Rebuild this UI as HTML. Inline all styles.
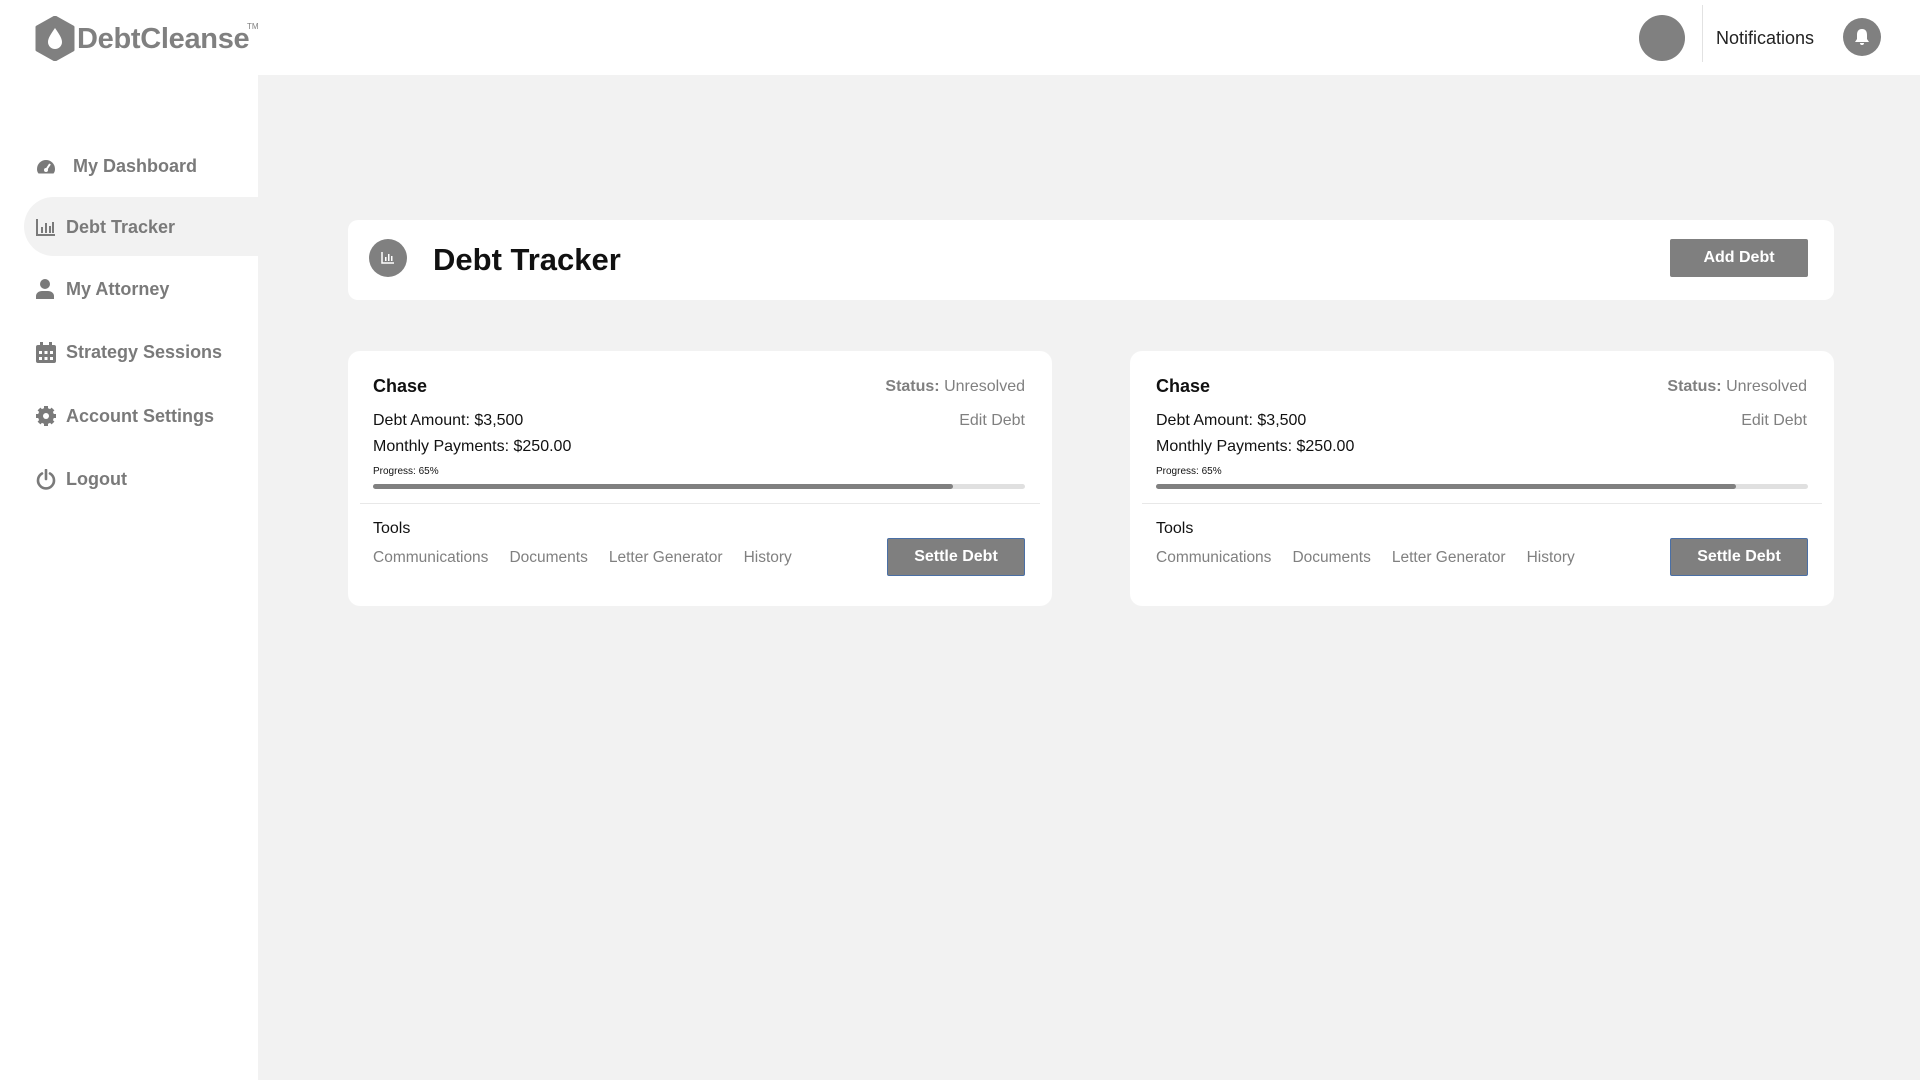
<!DOCTYPE html>
<html><head><meta charset="utf-8"><style>
*{box-sizing:border-box;margin:0;padding:0}
body{width:1920px;height:1080px;background:#f2f2f2;font-family:"Liberation Sans",sans-serif;position:relative;overflow:hidden;color:#111}
.abs{position:absolute}
#hdr{left:0;top:0;width:1920px;height:75px;background:#fff}
#side{left:0;top:75px;width:258px;height:1005px;background:#fff}
.nav{position:absolute;left:0;width:258px;font-size:18px;color:#7a7a7a;font-weight:bold;display:flex;align-items:center}
.nav svg{position:absolute;left:36px}
.card{background:#fff;border-radius:12px;position:absolute}
.gray{color:#808080}
.btn{position:absolute;background:#7f7f7f;color:#fff;font-weight:bold;font-size:16px;display:flex;align-items:center;justify-content:center;border-radius:2px}
</style></head><body>
<div id="hdr" class="abs">
<svg class="abs" style="left:34px;top:16px" width="42" height="45" viewBox="0 0 42 45"><path d="M21 1 L39 11 L39 34 L21 44 L3 34 L3 11 Z" fill="#808080" stroke="#808080" stroke-width="3" stroke-linejoin="round"/><path d="M21 12 C17 18 14 22 14 26 a7 7 0 0 0 14 0 C28 22 25 18 21 12Z" fill="#fff"/></svg>
<div class="abs" style="left:77px;top:23px;font-size:29px;font-weight:bold;color:#808080;letter-spacing:-0.3px">DebtCleanse</div>
<div class="abs" style="left:247px;top:22px;font-size:8px;color:#808080">TM</div>
<div class="abs" style="left:1639px;top:15px;width:46px;height:46px;border-radius:50%;background:#808080"></div>
<div class="abs" style="left:1702px;top:5px;width:1px;height:57px;background:#e2e2e2"></div>
<div class="abs" style="left:1716px;top:28px;font-size:18px;color:#222">Notifications</div>
<div class="abs" style="left:1843px;top:18px;width:38px;height:38px;border-radius:50%;background:#808080"></div>
<svg class="abs" style="left:1852px;top:27px" width="20" height="20" viewBox="0 0 20 20"><path d="M10 2 C6 2 5 5 5 8 L5 12 L3 15 L17 15 L15 12 L15 8 C15 5 14 2 10 2Z M8 16 a2 2 0 0 0 4 0Z" fill="#fff"/></svg>
</div>
<div id="side" class="abs"></div>
<div class="abs" style="left:24px;top:197px;width:234px;height:59px;background:#f2f2f2;border-radius:30px 0 0 30px"></div>
<div class="abs" style="left:238px;top:176px;width:20px;height:21px;background:#fff;border-bottom-right-radius:20px"></div>
<div class="abs" style="left:238px;top:256px;width:20px;height:21px;background:#fff;border-top-right-radius:20px"></div>
<div class="nav" style="top:153px;height:26px"><svg width="20" height="18" viewBox="0 0 20 18"><path d="M10 3a9 9 0 0 0-9 9c0 2 .6 3.5 1.5 4.5h15c.9-1 1.5-2.5 1.5-4.5a9 9 0 0 0-9-9z" fill="#7a7a7a"/><circle cx="10" cy="13" r="2" fill="#fff"/><path d="M10 13 L14 7" stroke="#fff" stroke-width="2"/></svg><span style="margin-left:73px">My Dashboard</span></div>
<div class="nav" style="top:214px;height:26px"><svg width="20" height="18" viewBox="0 0 20 18"><path d="M1 1v16h18" stroke="#7a7a7a" stroke-width="2" fill="none"/><rect x="5" y="9" width="2" height="6" fill="#7a7a7a"/><rect x="9" y="5" width="2" height="10" fill="#7a7a7a"/><rect x="13" y="8" width="2" height="7" fill="#7a7a7a"/><rect x="16" y="4" width="2" height="11" fill="#7a7a7a"/></svg><span style="margin-left:66px">Debt Tracker</span></div>
<div class="nav" style="top:276px;height:26px"><svg width="18" height="20" viewBox="0 0 18 20"><circle cx="9" cy="5" r="5" fill="#7a7a7a"/><path d="M0 20v-3c0-3 3-5 6-5h6c3 0 6 2 6 5v3z" fill="#7a7a7a"/></svg><span style="margin-left:66px">My Attorney</span></div>
<div class="nav" style="top:339px;height:26px"><svg width="20" height="21" viewBox="0 0 20 21"><rect x="0" y="3" width="20" height="18" rx="2" fill="#7a7a7a"/><rect x="4" y="0" width="3" height="5" fill="#7a7a7a"/><rect x="13" y="0" width="3" height="5" fill="#7a7a7a"/><g fill="#fff"><rect x="3" y="9" width="3" height="3"/><rect x="8.5" y="9" width="3" height="3"/><rect x="14" y="9" width="3" height="3"/><rect x="3" y="15" width="3" height="3"/><rect x="8.5" y="15" width="3" height="3"/><rect x="14" y="15" width="3" height="3"/></g></svg><span style="margin-left:66px">Strategy Sessions</span></div>
<div class="nav" style="top:403px;height:26px"><svg width="20" height="20" viewBox="0 0 20 20"><circle cx="10" cy="10" r="8" fill="#7a7a7a"/><g stroke="#7a7a7a" stroke-width="4"><path d="M10 0v20M0 10h20M3 3l14 14M17 3L3 17"/></g><circle cx="10" cy="10" r="3" fill="#fff"/></svg><span style="margin-left:66px">Account Settings</span></div>
<div class="nav" style="top:466px;height:26px"><svg width="20" height="21" viewBox="0 0 20 21"><path d="M6 4.5a8 8 0 1 0 8 0" stroke="#7a7a7a" stroke-width="2.6" fill="none" stroke-linecap="round"/><path d="M10 1v9" stroke="#7a7a7a" stroke-width="2.6" stroke-linecap="round"/></svg><span style="margin-left:66px">Logout</span></div>

<div class="card" style="left:348px;top:220px;width:1486px;height:80px;border-radius:10px">
<div class="abs" style="left:21px;top:19px;width:38px;height:38px;border-radius:50%;background:#808080"></div>
<svg class="abs" style="left:33px;top:31px" width="14" height="13" viewBox="0 0 14 13"><path d="M1 1v11h12" stroke="#fff" stroke-width="1.5" fill="none"/><rect x="4" y="6" width="1.5" height="4" fill="#fff"/><rect x="7" y="3" width="1.5" height="7" fill="#fff"/><rect x="10" y="5" width="1.5" height="5" fill="#fff"/></svg>
<div class="abs" style="left:85px;top:22px;font-size:31px;font-weight:bold;color:#111">Debt Tracker</div>
<div class="btn" style="left:1322px;top:19px;width:138px;height:38px">Add Debt</div>
</div>

<div class="card" style="left:348px;top:351px;width:704px;height:255px">
<div class="abs" style="left:25px;top:25px;font-size:18px;font-weight:bold">Chase</div>
<div class="abs gray" style="right:27px;top:27px;font-size:16px"><b>Status:</b> Unresolved</div>
<div class="abs" style="left:25px;top:61px;font-size:16px">Debt Amount: $3,500</div>
<div class="abs gray" style="right:27px;top:61px;font-size:16px">Edit Debt</div>
<div class="abs" style="left:25px;top:87px;font-size:16px">Monthly Payments: $250.00</div>
<div class="abs" style="left:25px;top:115px;font-size:10px">Progress: 65%</div>
<div class="abs" style="left:25px;top:133px;width:652px;height:5px;border-radius:3px;background:#e0e0e0"><div style="width:89%;height:5px;border-radius:3px;background:#808080"></div></div>
<div class="abs" style="left:12px;top:152px;width:680px;height:1px;background:#e8e8e8"></div>
<div class="abs" style="left:25px;top:169px;font-size:16px">Tools</div>
<div class="abs gray" style="left:25px;top:198px;font-size:15.5px">Communications<span style="margin-left:21px">Documents</span><span style="margin-left:21px">Letter Generator</span><span style="margin-left:21px">History</span></div>
<div class="btn" style="left:539px;top:187px;width:138px;height:38px;border:1.5px solid #4a6fa5">Settle Debt</div>
</div>

<div class="card" style="left:1130px;top:351px;width:704px;height:255px">
<div class="abs" style="left:26px;top:25px;font-size:18px;font-weight:bold">Chase</div>
<div class="abs gray" style="right:27px;top:27px;font-size:16px"><b>Status:</b> Unresolved</div>
<div class="abs" style="left:26px;top:61px;font-size:16px">Debt Amount: $3,500</div>
<div class="abs gray" style="right:27px;top:61px;font-size:16px">Edit Debt</div>
<div class="abs" style="left:26px;top:87px;font-size:16px">Monthly Payments: $250.00</div>
<div class="abs" style="left:26px;top:115px;font-size:10px">Progress: 65%</div>
<div class="abs" style="left:26px;top:133px;width:652px;height:5px;border-radius:3px;background:#e0e0e0"><div style="width:89%;height:5px;border-radius:3px;background:#808080"></div></div>
<div class="abs" style="left:12px;top:152px;width:680px;height:1px;background:#e8e8e8"></div>
<div class="abs" style="left:26px;top:169px;font-size:16px">Tools</div>
<div class="abs gray" style="left:26px;top:198px;font-size:15.5px">Communications<span style="margin-left:21px">Documents</span><span style="margin-left:21px">Letter Generator</span><span style="margin-left:21px">History</span></div>
<div class="btn" style="left:540px;top:187px;width:138px;height:38px;border:1.5px solid #4a6fa5">Settle Debt</div>
</div>
</body></html>
